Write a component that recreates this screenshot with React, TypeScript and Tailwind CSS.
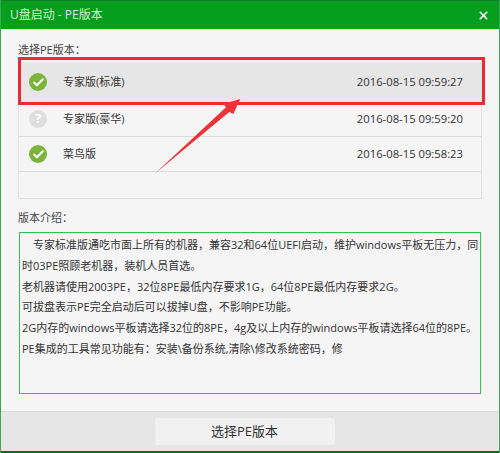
import { Check, X } from "lucide-react";

const font = { fontFamily: '"Open Sans", "Noto Sans CJK SC", sans-serif' };

function StatusIcon({ ok }: { ok: boolean }) {
    if (ok) {
        return (
            <div className="w-[18px] h-[18px] rounded-full bg-[#7cb53c] flex items-center justify-center">
                <Check size={13} strokeWidth={3.5} className="text-white" />
            </div>
        );
    }
    return (
        <div className="w-[18px] h-[18px] rounded-full bg-[#dedede] flex items-center justify-center text-white text-[13px] font-bold">
            ?
        </div>
    );
}

function VersionRow({ name, time, ok, selected }: { name: string; time: string; ok: boolean; selected?: boolean }) {
    return (
        <div
            className={
                selected
                    ? "h-[40px] shrink-0 flex items-center pl-[10px] pr-[18px] bg-[#e6e6e6] text-[#333]"
                    : "h-[35px] shrink-0 flex items-center pl-[10px] pr-[18px] border-b border-[#dcdcdc] text-[#333]"
            }
        >
            <StatusIcon ok={ok} />
            <span className="ml-[16px] text-[11px]">{name}</span>
            <span className="ml-auto text-[11.25px]">{time}</span>
        </div>
    );
}

export default function App() {
    return (
        <div className="relative w-[500px] h-[453px] overflow-hidden bg-[#f5f5f5] border-x border-[#3aa850] flex flex-col" style={font}>
            {/* タイトルバー */}
            <div className="h-[29px] shrink-0 bg-[#059e1d] border-t border-[#12802a] flex items-center justify-between pl-[9px] pr-[9px] text-[#cfeed4] text-[12px]">
                <span>U盘启动 - PE版本</span>
                <X size={13} strokeWidth={3} className="text-white" />
            </div>

            <div className="flex-1 px-[17px] flex flex-col">
                <div className="h-[30px] pt-[12px] flex items-center text-[11px] text-[#444]">选择PE版本：</div>

                <div className="h-[140px] pt-[2px] border border-[#e0e0e0] flex flex-col">
                    <VersionRow name="专家版(标准)" time="2016-08-15 09:59:27" ok selected />
                    <VersionRow name="专家版(豪华)" time="2016-08-15 09:59:20" ok={false} />
                    <VersionRow name="菜鸟版" time="2016-08-15 09:58:23" ok />
                </div>

                <div className="h-[33px] pt-[6px] flex items-center text-[11px] text-[#444]">版本介绍：</div>

                <div className="h-[162px] mx-[1px] border border-[#3dbb52] pl-[2px] pt-[2px] text-[11px] leading-[20.8px] text-[#333]">
                    <p className="indent-[11px]">专家标准版通吃市面上所有的机器，兼容32和64位UEFI启动，维护windows平板无压力，同时03PE照顾老机器，装机人员首选。</p>
                    <p>老机器请使用2003PE，32位8PE最低内存要求1G，64位8PE最低内存要求2G。</p>
                    <p>可拔盘表示PE完全启动后可以拔掉U盘，不影响PE功能。</p>
                    <p>2G内存的windows平板请选择32位的8PE，4g及以上内存的windows平板请选择64位的8PE。</p>
                    <p>PE集成的工具常见功能有：安装\备份系统,清除\修改系统密码，修</p>
                </div>
            </div>

            {/* 下部ボタン */}
            <div className="h-[42px] shrink-0 bg-[#e6e6e6] border-t border-[#dcdcdc] border-b-2 border-b-[#0a6b1e] flex items-center justify-center pr-[11px]">
                <button className="w-[180px] h-[27px] rounded-[3px] bg-[#f1f1f1] text-[13px] text-[#333]">选择PE版本</button>
            </div>

            {/* 注釈: 赤枠と矢印 */}
            <div className="absolute left-[17px] top-[57px] w-[467px] h-[48px] border-[3px] border-[#ee2a30]" />
            <svg className="absolute left-[150px] top-[95px]" width="95" height="80" viewBox="0 0 95 80">
                <path d="M4 78.5 L75 12.3 L72.3 9 L89.3 4 L82.3 19 L78.3 17 Z" fill="#ee3338" />
            </svg>
        </div>
    );
}
